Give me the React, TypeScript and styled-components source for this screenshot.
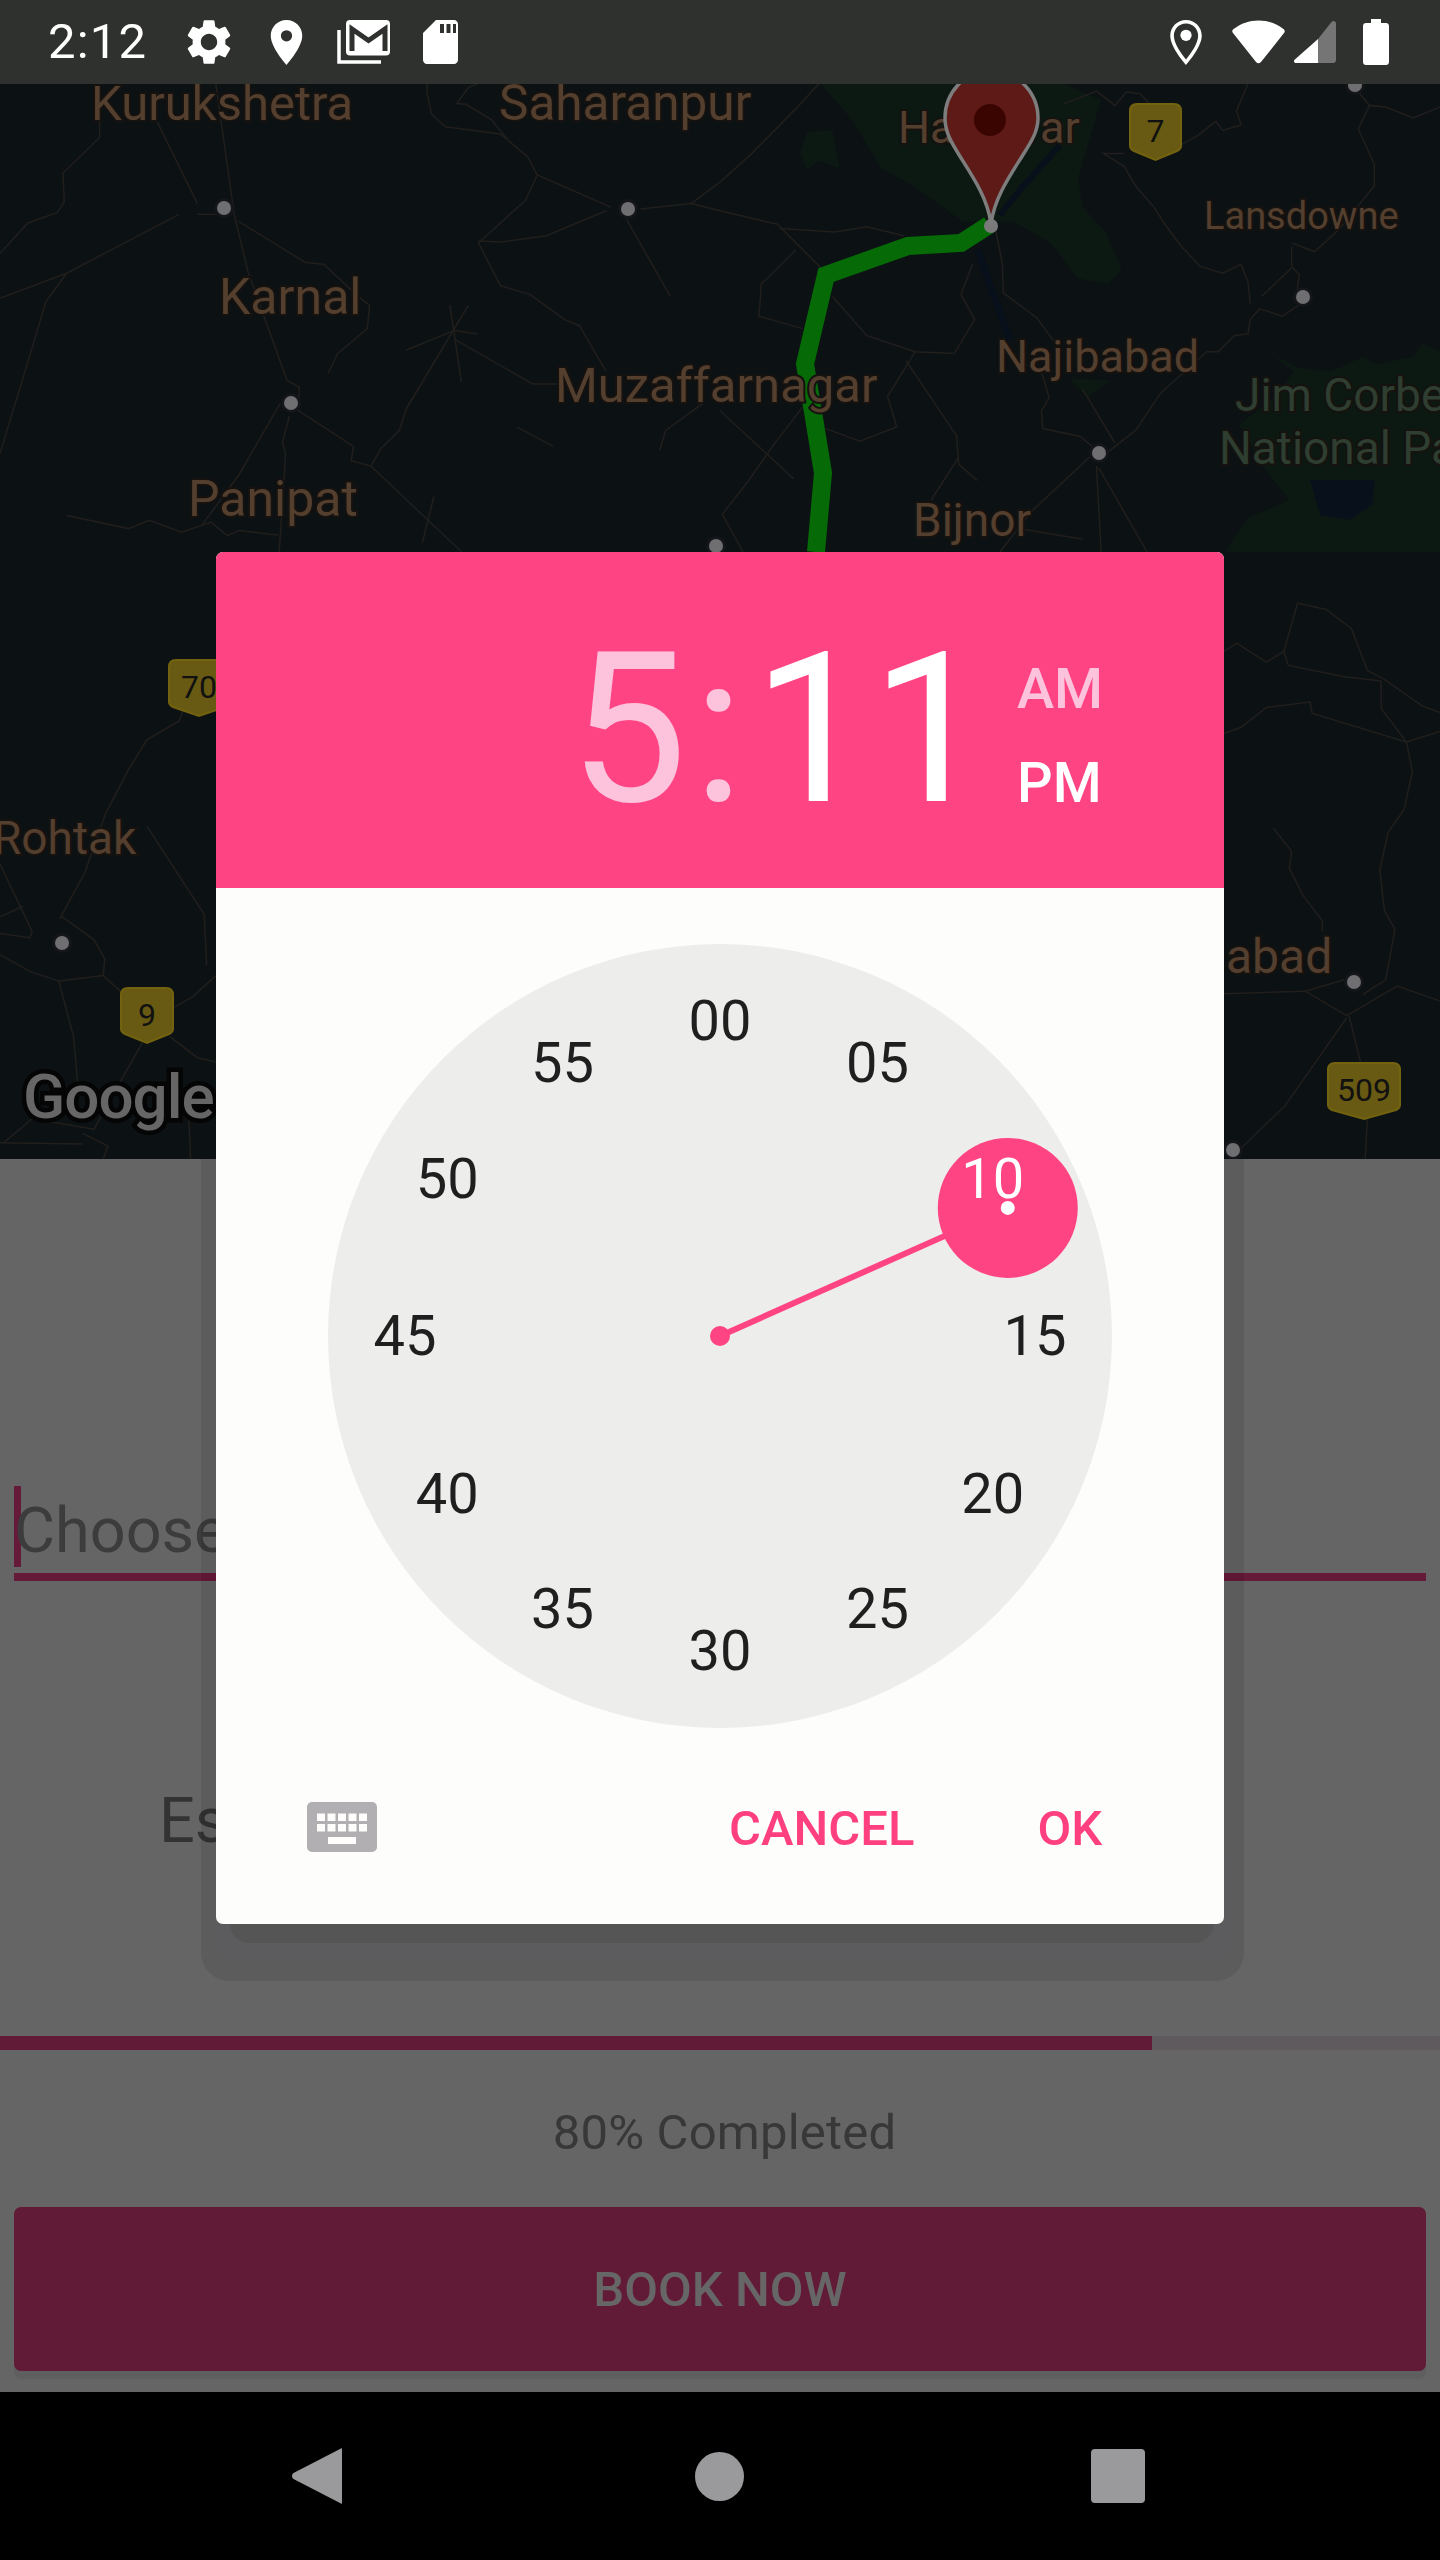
import styled, { createGlobalStyle } from "styled-components";

const GlobalStyle = createGlobalStyle`
  html, body {
    margin: 0;
    padding: 0;
    background: #000;
  }
  body {
    font-family: Roboto, "Liberation Sans", sans-serif;
  }
`;

const Phone = styled.div`
  position: relative;
  display: flex;
  flex-direction: column;
  width: 1440px;
  height: 2560px;
  overflow: hidden;
`;

const StatusBar = styled.div`
  display: flex;
  align-items: center;
  flex: none;
  height: 84px;
  padding: 0 51px 0 48px;
  box-sizing: border-box;
  background: #2f312e;
  color: #fff;
`;

const Clock = styled.span`
  font-size: 49px;
  line-height: 84px;
  letter-spacing: 1.2px;
`;

const BarIcon = styled.svg<{ $left: number }>`
  display: block;
  flex: none;
  margin-left: ${(props) => props.$left}px;
`;

const Spacer = styled.div`
  flex: 1;
`;

const MapView = styled.svg`
  display: block;
  flex: none;
  width: 1440px;
  height: 1075px;
  background: #0c1114;
`;

const Form = styled.div`
  position: relative;
  flex: 1;
  overflow: hidden;
  background: #656565;
`;

const InputRow = styled.div`
  display: flex;
  align-items: center;
  height: 87px;
  margin: 327px 14px 0;
  border-bottom: 8px solid #661a39;
`;

const Caret = styled.div`
  flex: none;
  width: 7px;
  height: 81px;
  margin-bottom: 6px;
  background: #661a39;
`;

const Placeholder = styled.span`
  margin-left: -7px;
  margin-top: 2px;
  font-size: 63px;
  color: #3c3c3c;
`;

const EstimateLabel = styled.div`
  margin: 203px 0 0 159px;
  font-size: 63px;
  line-height: 74px;
  color: #333;
`;

const Progress = styled.div`
  height: 14px;
  margin-top: 178px;
  background: #5e5a5e;
`;

const ProgressFill = styled.div`
  width: 80%;
  height: 100%;
  background: #621b36;
`;

const ProgressLabel = styled.div`
  margin: 48px 0 0 9px;
  font-size: 49px;
  line-height: 70px;
  letter-spacing: 0.2px;
  text-align: center;
  color: #383838;
`;

const BookButton = styled.div`
  display: flex;
  align-items: center;
  justify-content: center;
  height: 164px;
  margin: 39px 14px 0;
  border-radius: 7px;
  background: #621b36;
  box-shadow: 0 8px 0 #5f5f5f;
  font-size: 49px;
  font-weight: 500;
  color: #666;
`;

const DialogShadow = styled.div<{ $top: number; $left: number; $right: number; $bottom: number; $radius: number; $tone: string }>`
  position: absolute;
  top: ${(props) => props.$top}px;
  left: ${(props) => props.$left}px;
  right: ${(props) => props.$right}px;
  height: ${(props) => props.$bottom - props.$top}px;
  border-radius: 0 0 ${(props) => props.$radius}px ${(props) => props.$radius}px;
  background: ${(props) => props.$tone};
`;

const NavBar = styled.div`
  display: flex;
  align-items: center;
  flex: none;
  height: 168px;
  background: #000;
`;

const Dialog = styled.div`
  position: absolute;
  top: 552px;
  left: 216px;
  display: flex;
  flex-direction: column;
  width: 1008px;
  height: 1372px;
  border-radius: 7px;
  overflow: hidden;
  background: #fdfefc;
`;

const Header = styled.div`
  display: flex;
  align-items: center;
  flex: none;
  height: 336px;
  padding-left: 353px;
  box-sizing: border-box;
  background: #ff4484;
`;

const TimeText = styled.div`
  font-size: 210px;
  line-height: 210px;
  color: #fff;
  white-space: nowrap;
  margin-top: 18px;
`;

const DimPart = styled.span`
  color: #fdc3dc;
`;

const Colon = styled(DimPart)`
  margin: 0 9px 0 6px;
`;

const Meridiem = styled.div`
  display: flex;
  flex-direction: column;
  margin: 32px 0 0 28px;
  font-size: 56px;
  line-height: 94px;
  font-weight: 500;
`;

const MeridiemItem = styled.span<{ $active?: boolean }>`
  color: ${(props) => (props.$active ? "#fff" : "#fdc3dc")};
`;

const Dial = styled.div`
  position: relative;
  flex: none;
  width: 784px;
  height: 784px;
  margin: 56px auto 0;
  border-radius: 50%;
  background: #edeeec;
`;

const DialHand = styled.svg`
  position: absolute;
  inset: 0;
`;

const DialNumber = styled.span<{ $active?: boolean }>`
  position: absolute;
  width: 100px;
  line-height: 66px;
  margin: -33px 0 0 -50px;
  text-align: center;
  font-size: 56px;
  color: ${(props) => (props.$active ? "#fff" : "#1f1f1f")};
`;

const Footer = styled.div`
  display: flex;
  align-items: center;
  flex: 1;
  padding: 0 0 0 91px;
  margin-top: 2px;
`;

const TextButton = styled.span<{ $left: number }>`
  margin: 2px 0 0 ${(props) => props.$left}px;
  font-size: 49px;
  font-weight: 500;
  color: #fe4081;
`;

const tile = (ox: number, oy: number, sy: number, lines: string[]) =>
  lines.map((line) =>
    line
      .split(" ")
      .map((p) => {
        const [x, y] = p.split(",").map(Number);
        return `${(ox + x / 2.178).toFixed(1)},${(oy + y / sy).toFixed(1)}`;
      })
      .join(" "),
  );

const roads = [
  ...tile(0, 0, 2.8, [
    "0,710 60,625 125,595 140,565 137,485 217,385 217,235",
    "470,235 510,600 540,760 625,1065 652,1085 650,1150 770,1250 765,1290 808,1305 1005,1545",
    "340,335 430,570",
    "430,600 470,600",
    "520,620 665,735 705,740 780,830 805,855 800,920 735,990 715,1045",
    "0,835 145,765 390,600",
    "145,765 100,845 72,965 0,1270",
    "930,235 930,260 940,320 970,355 1090,375 1150,440 1170,490 1330,580",
    "1040,235 1020,245 995,290 1015,292 1070,335 1105,390",
    "1170,490 1145,560 1042,680 1090,800 1155,825 1230,895 1262,912 1320,1040",
    "1042,675 1090,678 1190,660 1320,590",
    "1365,615 1460,830",
    "1395,585 1505,570 1568,590",
    "1505,570 1568,510",
    "885,980 990,925 1040,935",
    "980,855 1005,1070",
    "1020,855 885,1145 870,1205 830,1255 808,1305",
    "990,950 1160,1075 1215,1075",
    "1125,1195 1205,1250",
    "1530,1130 1450,1205 1437,1260",
    "610,1130 520,1330 440,1470",
    "630,1165 615,1240 622,1270 608,1545",
    "145,1443 280,1480 325,1457 395,1490 460,1462 495,1500 520,1485 605,1498",
    "945,1390 920,1520",
  ]),
  ...tile(720, 0, 2.8, [
    "0,510 65,435 165,305 215,235",
    "0,590 125,628 220,750",
    "130,640 250,650 320,635 400,660",
    "165,700 90,795 85,885 180,920",
    "245,830 320,940 425,985 510,990 555,895 525,825 550,740",
    "425,985 365,1110 385,1195 305,1235 230,1200",
    "405,1010 515,1220 520,1300 560,1345",
    "520,1280 460,1400",
    "600,640 615,740 617,820 690,890 730,960",
    "700,1040 717,1115 700,1150 703,1200 785,1222 825,1265",
    "790,1090 860,1240",
    "845,1265 905,1205 960,1100 1060,985 1085,985 1120,940 1150,935 1155,895 1175,865 1225,885 1265,850 1270,833",
    "805,1280 680,1430 610,1545",
    "820,1305 830,1545",
    "825,1310 930,1545",
    "0,1150 160,1340",
    "180,1140 120,1240 60,1350 5,1440 50,1545",
    "650,1480 790,1510",
    "750,290 820,255 860,295 885,258 915,262 935,290 1000,330 1005,405 1040,380 1080,340 1095,365 1135,350 1125,310 1150,235",
    "880,430 835,430 880,465 905,520 945,580 970,630 1005,690 1045,745 1095,765 1135,740 1150,790 1155,850",
    "1245,690 1245,745 1262,770 1255,830",
    "1245,680 1295,705 1350,640 1425,520 1425,460 1390,360 1415,295 1450,300 1510,330 1568,300",
    "1415,295 1385,250",
    "1180,830 1245,750",
  ]),
  ...tile(0, 540, 2.376, [
    "0,770 70,930 65,945 0,935",
    "130,900 185,790 230,650 280,545 320,475 390,430 400,400",
    "135,895 205,950 228,995 225,1035 128,1048 65,1025 0,985",
    "225,1035 270,1080",
    "128,1048 160,1180 170,1300",
    "320,680 445,890 450,1010",
    "0,895 50,870",
    "310,1195 250,1310 205,1400 70,1375 10,1430",
    "370,1180 430,1230 470,1240",
    "380,1110 420,1085 470,1035",
    "180,1410 235,1440 225,1470",
    "0,1432 180,1435",
    "410,1340 415,1470",
  ]),
  ...tile(720, 540, 2.376, [
    "1098,265 1125,245 1190,290 1228,265 1258,150 1320,165 1375,210 1410,310 1445,330 1530,395 1568,410",
    "1228,265 1238,298 1360,325 1440,335",
    "1440,335 1440,400 1495,480 1508,550 1490,640 1455,695 1437,785 1447,880 1470,925 1450,1045 1400,1080",
    "1098,460 1135,445 1190,398 1285,385 1290,412 1495,480",
    "1495,480 1568,455",
    "1205,685 1245,740 1240,780 1270,845 1312,905 1312,930",
    "1098,1078 1275,1072 1365,1130 1475,1060 1568,1095",
    "1275,1072 1360,1045",
    "1370,1130 1395,1240",
    "1365,1135 1230,1345 1130,1450",
    "1410,1375 1405,1471",
  ]),
];

const forests = tile(720, 0, 2.8, [
  "220,235 290,340 350,470 420,520 530,620 640,620 720,680 780,780 845,795 875,755 840,650 790,580 780,500 830,280 750,235",
  "175,430 190,370 245,365 260,470 215,450 190,475",
  "760,1060 850,1065 800,1110",
  "1130,1190 1210,1110 1250,1040 1180,970 1215,1000 1260,1030 1330,1040 1400,1000 1430,1020 1510,1000 1530,960 1568,985 1568,1545 1100,1545 1150,1450 1240,1400 1180,1300",
]);

const cityDots = [
  [224, 208],
  [628, 209],
  [291, 403],
  [716, 546],
  [1355, 85],
  [1303, 297],
  [1099, 453],
  [62, 943],
  [1354, 982],
  [1233, 1150],
];

const labels = [
  { text: "Kurukshetra", x: 91, y: 120, size: 49 },
  { text: "Saharanpur", x: 499, y: 120, size: 49.5 },
  { text: "Karnal", x: 219, y: 314, size: 50 },
  { text: "Muzaffarnagar", x: 555, y: 402, size: 49 },
  { text: "Panipat", x: 188, y: 516, size: 50 },
  { text: "Haridwar", x: 898, y: 143, size: 45 },
  { text: "Lansdowne", x: 1204, y: 229, size: 38 },
  { text: "Najibabad", x: 996, y: 372, size: 45 },
  { text: "Bijnor", x: 913, y: 536, size: 46 },
  { text: "Rohtak", x: -7, y: 854, size: 46 },
  { text: "abad", x: 1226, y: 973, size: 48 },
  { text: "Jim Corbett", x: 1235, y: 411, size: 46, tone: "#2e3e30" },
  { text: "National Park", x: 1219, y: 464, size: 46, tone: "#2e3e30" },
];

const shields = [
  { text: "7", x: 1130, y: 104, w: 51, h: 56 },
  { text: "70", x: 169, y: 660, w: 60, h: 56 },
  { text: "9", x: 121, y: 988, w: 52, h: 55 },
  { text: "509", x: 1328, y: 1063, w: 72, h: 56 },
];

const MapLabel = styled.text<{ $tone?: string; $size: number }>`
  font-family: Roboto, sans-serif;
  font-size: ${(props) => props.$size}px;
  fill: ${(props) => props.$tone ?? "#543f2e"};
  stroke: #15120f;
  stroke-width: 4px;
  paint-order: stroke;
`;

const ShieldText = styled.text`
  font-family: Roboto, sans-serif;
  font-size: 32px;
  fill: #111;
  text-anchor: middle;
`;

const GoogleMark = styled.text`
  font-family: Roboto, sans-serif;
  font-size: 62px;
  font-weight: 500;
  letter-spacing: -1px;
  fill: #666;
  stroke: #050505;
  stroke-width: 9px;
  paint-order: stroke;
`;

function MapLayer() {
  return (
    <MapView viewBox="0 84 1440 1075">
      {forests.map((points) => (
        <polygon key={points} points={points} fill="#0c1912" />
      ))}
      <polygon points="1310,480 1375,480 1372,505 1350,520 1320,515" fill="#07101b" />
      <polyline points="978,250 990,285 1010,340" fill="none" stroke="#07101b" strokeWidth="7" />
      <polyline points="1060,145 1020,190 1000,215" fill="none" stroke="#07101b" strokeWidth="6" />
      {roads.map((points) => (
        <polyline key={points} points={points} fill="none" stroke="#211f1c" strokeWidth="1.5" />
      ))}
      <polyline
        points="989,225 961,243 908,246 826,275 805,364 814,418 823,473 816,552"
        fill="none"
        stroke="#066b06"
        strokeWidth="18"
      />
      {labels.map((label) => (
        <MapLabel key={label.text} x={label.x} y={label.y} $tone={label.tone} $size={label.size}>
          {label.text}
        </MapLabel>
      ))}
      {cityDots.map(([x, y]) => (
        <g key={`${x}-${y}`}>
          <circle cx={x} cy={y} r="10" fill="#14161a" />
          <circle cx={x} cy={y} r="7" fill="#6f6f71" />
        </g>
      ))}
      {shields.map((shield) => {
        const { x, y, w, h } = shield;
        const cut = y + h - 11;
        return (
          <g key={shield.text}>
            <path
              d={`M${x + 7} ${y}H${x + w - 7}Q${x + w} ${y} ${x + w} ${y + 7}V${cut - 3}Q${x + w} ${cut} ${x + w - 4} ${cut + 2}L${x + w / 2} ${y + h}L${x + 4} ${cut + 2}Q${x} ${cut} ${x} ${cut - 3}V${y + 7}Q${x} ${y} ${x + 7} ${y}Z`}
              fill="#685a12"
              stroke="#73620f"
              strokeWidth="2"
            />
            <ShieldText x={x + w / 2} y={y + 38}>
              {shield.text}
            </ShieldText>
          </g>
        );
      })}
      <GoogleMark x="23" y="1118">
        Google
      </GoogleMark>
      <circle cx="991" cy="226" r="7" fill="#7a7a7a" />
      <path
        d="M991 224C988 200 975 180 961 158C951 142 945 132 945 118C945 92 966 70 991 70C1016 70 1038 92 1038 118C1038 132 1031 142 1021 158C1007 180 994 200 991 224Z"
        fill="#5e1a16"
        stroke="#7d7d7d"
        strokeWidth="3.5"
      />
      <ellipse cx="990" cy="120" rx="16" ry="16" fill="#3a0500" />
    </MapView>
  );
}

const dialValues = ["00", "05", "10", "15", "20", "25", "30", "35", "40", "45", "50", "55"];
const DIAL_CENTER = 392;
const NUMBER_RADIUS = 315;
const selectedMinute = 11;

function pointOnDial(minute: number, radius: number) {
  const angle = (minute / 60) * 2 * Math.PI;
  return {
    x: DIAL_CENTER + radius * Math.sin(angle),
    y: DIAL_CENTER - radius * Math.cos(angle),
  };
}

function TimeDial() {
  const selected = pointOnDial(selectedMinute, NUMBER_RADIUS);
  return (
    <Dial>
      <DialHand width="784" height="784" viewBox="0 0 784 784">
        <line x1={DIAL_CENTER} y1={DIAL_CENTER} x2={selected.x} y2={selected.y} stroke="#ff4484" strokeWidth="6" />
        <circle cx={DIAL_CENTER} cy={DIAL_CENTER} r="10" fill="#ff4484" />
        <circle cx={selected.x} cy={selected.y} r="70" fill="#ff4484" />
        <circle cx={selected.x} cy={selected.y} r="7" fill="#fff" />
      </DialHand>
      {dialValues.map((value, i) => {
        const p = pointOnDial(i * 5, NUMBER_RADIUS);
        return (
          <DialNumber key={value} $active={value === "10"} style={{ left: p.x, top: p.y }}>
            {value}
          </DialNumber>
        );
      })}
    </Dial>
  );
}

export default function App() {
  return (
    <Phone>
      <GlobalStyle />
      <StatusBar>
        <Clock>2:12</Clock>
        <BarIcon $left={40} width="44" height="46" viewBox="2.6 1.9 18.8 20.2" fill="#fff">
          <path d="M19.14 12.94c.04-.3.06-.61.06-.94 0-.32-.02-.64-.07-.94l2.03-1.58c.18-.14.23-.41.12-.61l-1.92-3.32c-.12-.22-.37-.29-.59-.22l-2.39.96c-.5-.38-1.03-.7-1.62-.94l-.36-2.54c-.04-.24-.24-.41-.48-.41h-3.84c-.24 0-.43.17-.47.41l-.36 2.54c-.59.24-1.13.57-1.62.94l-2.39-.96c-.22-.08-.47 0-.59.22L2.74 8.87c-.12.21-.08.47.12.61l2.03 1.58c-.05.3-.09.63-.09.94s.02.64.07.94l-2.03 1.58c-.18.14-.23.41-.12.61l1.92 3.32c.12.22.37.29.59.22l2.39-.96c.5.38 1.03.7 1.62.94l.36 2.54c.05.24.24.41.48.41h3.84c.24 0 .44-.17.47-.41l.36-2.54c.59-.24 1.13-.56 1.62-.94l2.39.96c.22.08.47 0 .59-.22l1.92-3.32c.12-.22.07-.47-.12-.61l-2.01-1.58zM12 15.6c-1.98 0-3.6-1.62-3.6-3.6s1.62-3.6 3.6-3.6 3.6 1.62 3.6 3.6-1.62 3.6-3.6 3.6z" />
        </BarIcon>
        <BarIcon $left={39} width="33" height="45" viewBox="5 2 14 20" fill="#fff">
          <path
            fillRule="evenodd"
            d="M12 2C8.13 2 5 5.13 5 9c0 5.25 7 13 7 13s7-7.75 7-13c0-3.87-3.13-7-7-7zm0 9.5a2.5 2.5 0 0 1 0-5 2.5 2.5 0 0 1 0 5z"
          />
        </BarIcon>
        <BarIcon $left={34} width="53" height="44" viewBox="0 0 53 44">
          <path d="M2 10V42H44" fill="none" stroke="#fff" strokeWidth="3.5" />
          <rect x="9" y="0" width="44" height="35.5" rx="4" fill="#fff" />
          <path d="M15 31V9L31.5 20.5L48 9V31" fill="none" stroke="#2f312e" strokeWidth="5" />
        </BarIcon>
        <BarIcon $left={33} width="35" height="44" viewBox="0 0 35 44">
          <path
            fillRule="evenodd"
            fill="#fff"
            d="M13 0H31C33.2 0 35 1.8 35 4V40C35 42.2 33.2 44 31 44H4C1.8 44 0 42.2 0 40V13ZM17 4V13H21V4ZM23.5 4V13H27.5V4ZM30 4V13H33V4Z"
          />
        </BarIcon>
        <Spacer />
        <BarIcon $left={0} width="32" height="45" viewBox="5 2 14 20" fill="#fff">
          <path
            fillRule="evenodd"
            d="M12 2C8.13 2 5 5.13 5 9c0 5.25 7 13 7 13s7-7.75 7-13c0-3.87-3.13-7-7-7zM6.6 9c0-3 2.4-5.4 5.4-5.4s5.4 2.4 5.4 5.4c0 3.2-3.2 8-5.4 10.5C9.8 17 6.6 12.2 6.6 9z"
          />
          <circle cx="12" cy="8.8" r="2.5" />
        </BarIcon>
        <BarIcon $left={30} width="53" height="44" viewBox="0 0 53 44">
          <path
            fill="#fff"
            d="M1 13C-0.2 11.5 0 10 2 8.8C9 3.5 17 0.5 26.5 0.5C36 0.5 44 3.5 51 8.8C53 10 53.2 11.5 52 13L29 42C27.6 43.6 25.4 43.6 24 42Z"
          />
        </BarIcon>
        <BarIcon $left={9} width="42" height="42" viewBox="0 0 42 42">
          <path fill="#757575" d="M24 18L37.5 1C39.5-0.8 42 0.2 42 3V39C42 40.7 40.7 42 39 42H24Z" />
          <path fill="#fff" d="M24 18V42H2C0 42-0.6 40 0.6 38.8Z" />
        </BarIcon>
        <BarIcon $left={27} width="26" height="46" viewBox="0 0 26 46">
          <path
            fill="#fff"
            d="M8 0H18V4H23C24.7 4 26 5.3 26 7V43C26 44.7 24.7 46 23 46H3C1.3 46 0 44.7 0 43V7C0 5.3 1.3 4 3 4H8Z"
          />
        </BarIcon>
      </StatusBar>
      <MapLayer />
      <Form>
        <InputRow>
          <Caret />
          <Placeholder>Choose</Placeholder>
        </InputRow>
        <EstimateLabel>Es</EstimateLabel>
        <Progress>
          <ProgressFill />
        </Progress>
        <ProgressLabel>80% Completed</ProgressLabel>
        <BookButton>BOOK NOW</BookButton>
        <DialogShadow $top={0} $left={201} $right={196} $bottom={822} $radius={28} $tone="rgba(0, 0, 0, 0.085)" />
        <DialogShadow $top={700} $left={216} $right={210} $bottom={803} $radius={24} $tone="#5c5b5d" />
        <DialogShadow $top={700} $left={230} $right={226} $bottom={784} $radius={20} $tone="#555" />
      </Form>
      <NavBar>
        <BarIcon $left={292} width="50" height="56" viewBox="0 0 50 56" fill="#9a999c">
          <path d="M50 1V55C50 56 49 56 48 55L1.5 31C-0.5 29.5-0.5 26.5 1.5 25L48 1C49 0 50 0 50 1Z" />
        </BarIcon>
        <BarIcon $left={353} width="49" height="49" viewBox="0 0 49 49" fill="#9a999c">
          <circle cx="24.5" cy="24.5" r="24.5" />
        </BarIcon>
        <BarIcon $left={347} width="54" height="54" viewBox="0 0 54 54" fill="#9a999c">
          <rect width="54" height="54" rx="4" />
        </BarIcon>
      </NavBar>
      <Dialog>
        <Header>
          <TimeText>
            <DimPart>5</DimPart>
            <Colon>:</Colon>11
          </TimeText>
          <Meridiem>
            <MeridiemItem>AM</MeridiemItem>
            <MeridiemItem $active>PM</MeridiemItem>
          </Meridiem>
        </Header>
        <TimeDial />
        <Footer>
          <svg width="70" height="50" viewBox="0 0 70 50">
            <rect width="70" height="50" rx="5" fill="#b1afb2" />
            {[0, 1, 2, 3, 4].map((col) =>
              [11.5, 22].map((top) => <rect key={`${col}-${top}`} x={10 + col * 10.5} y={top} width="8" height="7.5" fill="#fdfefc" />),
            )}
            <rect x="21" y="35" width="28" height="7" fill="#fdfefc" />
          </svg>
          <TextButton $left={352}>CANCEL</TextButton>
          <TextButton $left={123}>OK</TextButton>
        </Footer>
      </Dialog>
    </Phone>
  );
}
